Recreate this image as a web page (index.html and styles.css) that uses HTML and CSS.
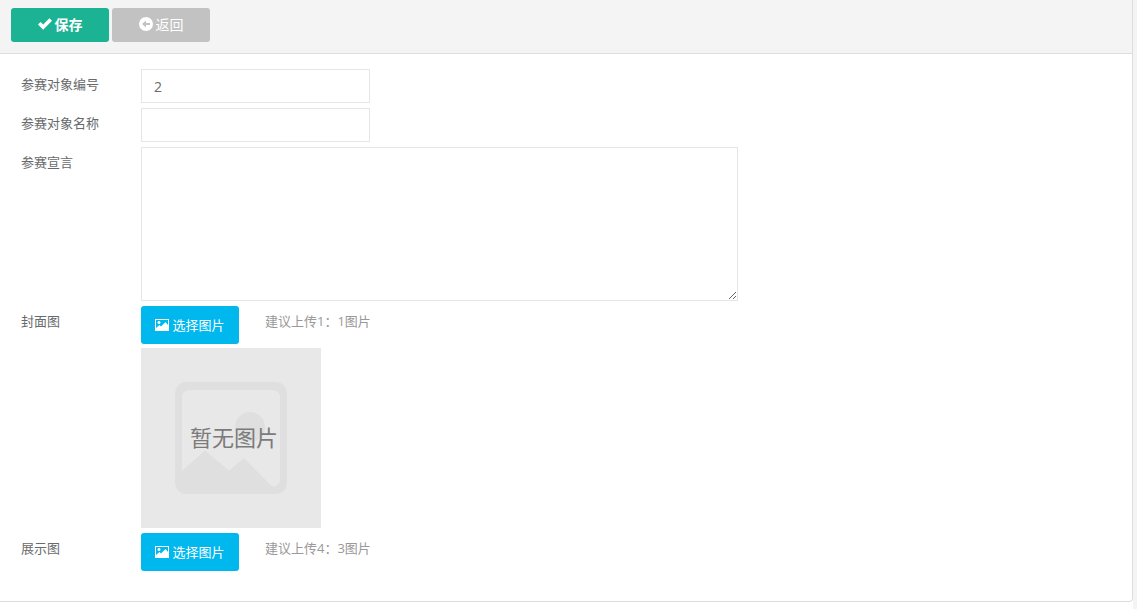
FILE: index.html
```html
<!DOCTYPE html>
<html lang="zh-CN">
<head>
    <meta charset="UTF-8">
    <title>参赛对象</title>
    <link rel="stylesheet" href="styles.css">
</head>
<body>
<form class="panel">
    <div class="toolbar">
        <button class="btn btn-save" type="button">
            <svg class="icon" viewBox="0 0 14 14"><path d="M0 7.600 2.600 5 5.200 7.600 11.400 1.200 14 3.800 5.200 12.800Z"/></svg>
            保存
        </button>
        <button class="btn btn-back" type="button">
            <svg class="icon" viewBox="0 0 14 14"><path fill-rule="evenodd" d="M7 0a7 7 0 1 0 0 14A7 7 0 1 0 7 0ZM3 7 7 3.500V6H11V8H7V10.500Z"/></svg>
            返回
        </button>
    </div>
    <div class="content">
        <div class="row">
            <label class="name" for="num">参赛对象编号</label>
            <input class="text" id="num" type="text" value="2">
        </div>
        <div class="row">
            <label class="name" for="title">参赛对象名称</label>
            <input class="text" id="title" type="text">
        </div>
        <div class="row">
            <label class="name" for="words">参赛宣言</label>
            <textarea class="area" id="words"></textarea>
        </div>
        <div class="row">
            <label class="name" for="cover">封面图</label>
            <div class="upload">
                <div class="pick">
                    <button class="btn-pick" id="cover" type="button">
                        <svg class="icon" viewBox="0 0 14 14"><path fill-rule="evenodd" d="M0 2H14V14H0ZM1 3V11L4.500 8 6 9.500 10.500 5 13 8V3ZM4 4a1.500 1.500 0 1 0 0.010 0Z"/></svg>
                        选择图片
                    </button>
                    <span class="hint">建议上传1：1图片</span>
                </div>
                <!-- 默认占位图 -->
                <svg class="preview" viewBox="0 0 180 180">
                    <rect class="preview-bg" width="180" height="180"/>
                    <path class="preview-shape" fill-rule="evenodd" d="M47 34H133Q146 34 146 47V133Q146 146 133 146H47Q34 146 34 133V47Q34 34 47 34ZM49 42Q41 42 41 50V123L64 102.500 88 122.500 103 110 129 136.500Q133 140 136.500 137 139 135 139 131V50Q139 42 131 42Z"/>
                    <circle class="preview-shape" cx="109" cy="79" r="15"/>
                    <text class="preview-text" x="93" y="98">暂无图片</text>
                </svg>
            </div>
        </div>
        <div class="row">
            <label class="name" for="show">展示图</label>
            <div class="pick">
                <button class="btn-pick" id="show" type="button">
                    <svg class="icon" viewBox="0 0 14 14"><path fill-rule="evenodd" d="M0 2H14V14H0ZM1 3V11L4.500 8 6 9.500 10.500 5 13 8V3ZM4 4a1.500 1.500 0 1 0 0.010 0Z"/></svg>
                    选择图片
                </button>
                <span class="hint">建议上传4：3图片</span>
            </div>
        </div>
    </div>
</form>
</body>
</html>
```
FILE: styles.css
```css
*{
    box-sizing: border-box;
}
body{
    margin:0;
    min-height:100vh;
    border-right:4px solid #f4f4f4;
    background-color: #fff;
    color:#676a6c;
    font-family: "Open Sans","Noto Sans CJK SC",sans-serif;
    font-size:13px;
}
button,input,textarea{
    font-family: inherit;
}
.panel{
    border:1px solid #ddd;
    border-top:0;
    border-left:0;
    border-radius: 0 0 4px 0;
}
.toolbar{
    display: flex;
    gap:3px;
    padding:8px 11px 11px;
    background-color: #f4f4f4;
    border-bottom:1px solid #ddd;
}
.btn,.btn-pick{
    display: flex;
    align-items: center;
    justify-content: center;
    gap:3px;
    width:98px;
    padding:0 0 2px;
    border:0;
    border-radius: 3px;
    color:#fff;
}
.btn{
    height:34px;
    font-size:14px;
}
.btn-save{
    background-color: #1cb394;
    font-weight: bold;
}
.btn-back{
    background-color: #c2c2c2;
}
.btn-pick{
    height:38px;
    background-color: #00b7ee;
    font-size:13px;
}
.icon{
    width:14px;
    height:14px;
    fill:currentColor;
}
.content{
    display: flex;
    flex-direction: column;
    gap:5px;
    padding:15px 20px 30px 21px;
}
.row{
    display: flex;
    align-items: flex-start;
}
.name{
    flex:0 0 120px;
    line-height: 30px;
}
.text{
    width:229px;
    height:34px;
    padding:6px 12px;
    border:1px solid #e5e6e7;
    background-color: #fff;
    color:#676a6c;
    font-size:14px;
}
.area{
    width:597px;
    height:154px;
    padding:6px 12px;
    border:1px solid #e5e6e7;
    font-size:14px;
    color:#676a6c;
    resize: both;
}
.upload{
    display: flex;
    flex-direction: column;
    gap:4px;
}
.pick{
    display: flex;
    gap:26px;
}
.hint{
    line-height: 30px;
    color:#999;
}
.preview{
    width:180px;
    height:180px;
}
.preview-bg{
    fill:#e8e8e8;
}
.preview-shape{
    fill:#dfdfdf;
}
.preview-text{
    fill:#7b7b7b;
    font-size:22px;
    text-anchor: middle;
}
```
